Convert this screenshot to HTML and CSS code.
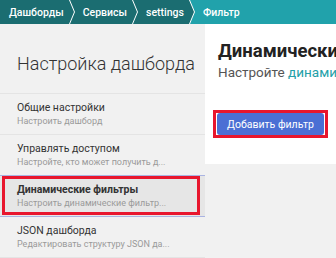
FILE: index.html
```html
<!DOCTYPE html>
<html lang="ru">
<head>
    <meta charset="UTF-8">
    <title>Фильтр</title>
    <link rel="stylesheet" href="styles.css">
</head>
<body>
    <nav class="crumbs">
        <a class="crumb first">Дашборды</a>
        <svg class="sep" width="6" height="24" viewBox="0 0 6 24"><rect width="6" height="24" fill="#1b6d71"/><polyline points="0.5,0 5.5,12 0.5,24" fill="none" stroke="#fff" stroke-width="1"/></svg>
        <a class="crumb">Сервисы</a>
        <svg class="sep" width="6" height="24" viewBox="0 0 6 24"><rect width="6" height="24" fill="#1b6d71"/><polyline points="0.5,0 5.5,12 0.5,24" fill="none" stroke="#fff" stroke-width="1"/></svg>
        <a class="crumb">settings</a>
        <svg class="sep" width="6" height="24" viewBox="0 0 6 24"><rect width="6" height="24" fill="#21a2ab"/><polygon points="0,0 0.5,0 5.5,12 0.5,24 0,24" fill="#1b6d71"/><polyline points="0.5,0 5.5,12 0.5,24" fill="none" stroke="#fff" stroke-width="1"/></svg>
        <a class="crumb current">Фильтр</a>
    </nav>

    <div class="page">
        <aside class="sidebar">
            <div class="sidebar-title">Настройка дашборда</div>
            <div class="item">
                <div class="item-name">Общие настройки</div>
                <div class="item-desc">Настроить дашборд</div>
            </div>
            <div class="item">
                <div class="item-name">Управлять доступом</div>
                <div class="item-desc">Настройте, кто может получить д...</div>
            </div>
            <div class="item active">
                <div class="item-name">Динамические фильтры</div>
                <div class="item-desc">Настроить динамические фильтр...</div>
            </div>
            <div class="item">
                <div class="item-name">JSON дашборда</div>
                <div class="item-desc">Редактировать структуру JSON да...</div>
            </div>
        </aside>

        <section class="panel">
            <h1>Динамические фильтры</h1>
            <p>Настройте <span class="link">динамические фильтры дашборда</span></p>
            <div class="actions">
                <button class="btn-add">Добавить фильтр</button>
            </div>
        </section>
    </div>
</body>
</html>
```

FILE: styles.css
```css
body {
    margin: 0;
    background-color: #f1f1f1;
    font-family: Roboto, "Noto Sans", sans-serif;
    color: #333;
    overflow: hidden;
}
.crumbs {
    display: flex;
    height: 24px;
    background-color: #21a2ab;
}
.crumb {
    display: flex;
    align-items: center;
    padding: 0 5px 0 8px;
    background-color: #1b6d71;
    color: #ffffff;
    font-size: 10.5px;
    font-weight: 500;
    white-space: nowrap;
}
.crumb.first {
    padding-left: 9px;
}
.crumb.current {
    background-color: #21a2ab;
}
.sep {
    display: block;
    flex-shrink: 0;
}
.page {
    display: flex;
    align-items: flex-start;
}
.sidebar {
    width: 205px;
    flex-shrink: 0;
}
.sidebar-title {
    padding: 28px 17px 17px;
    font-size: 18px;
    line-height: 24px;
    font-weight: 300;
    white-space: nowrap;
    border-bottom: 1px solid #e4e4e4;
}
.item {
    position: relative;
    padding: 7px 17px;
    border-bottom: 1px solid #e4e4e4;
}
.item-name {
    font-size: 10.5px;
    line-height: 14px;
    white-space: nowrap;
}
.item-desc {
    font-size: 9px;
    line-height: 12px;
    color: #9a9a9a;
    white-space: nowrap;
}
.item.active {
    background-color: #e6e6e6;
    border-bottom-color: #aab4e2;
    box-shadow: 0 -1px 0 #aab4e2;
}
.item.active .item-name {
    font-weight: 700;
}
.item.active::after {
    content: "";
    position: absolute;
    top: 0;
    left: 2px;
    right: 5px;
    bottom: 1px;
    border: 3px solid #e8162d;
}
.panel {
    flex: 1;
    min-width: 0;
    height: 140px;
    box-sizing: border-box;
    padding: 15px 0 0 13px;
    background-color: #ffffff;
    overflow: hidden;
}
.panel h1 {
    margin: 0;
    font-size: 18.5px;
    line-height: 24px;
    font-weight: 700;
    color: #222;
    white-space: nowrap;
}
.panel p {
    margin: 0;
    font-size: 13.5px;
    line-height: 18px;
    color: #555;
    white-space: nowrap;
}
.link {
    color: #23a0a8;
}
.actions {
    display: inline-block;
    margin: 29px 0 0 -5px;
    border: 3px solid #e8162d;
    padding: 0 1px;
}
.btn-add {
    display: block;
    height: 22px;
    width: 107px;
    border: none;
    border-radius: 3px;
    background-color: #4b6fd4;
    color: #ffffff;
    font-family: inherit;
    font-size: 10.5px;
    padding: 0;
}
```
